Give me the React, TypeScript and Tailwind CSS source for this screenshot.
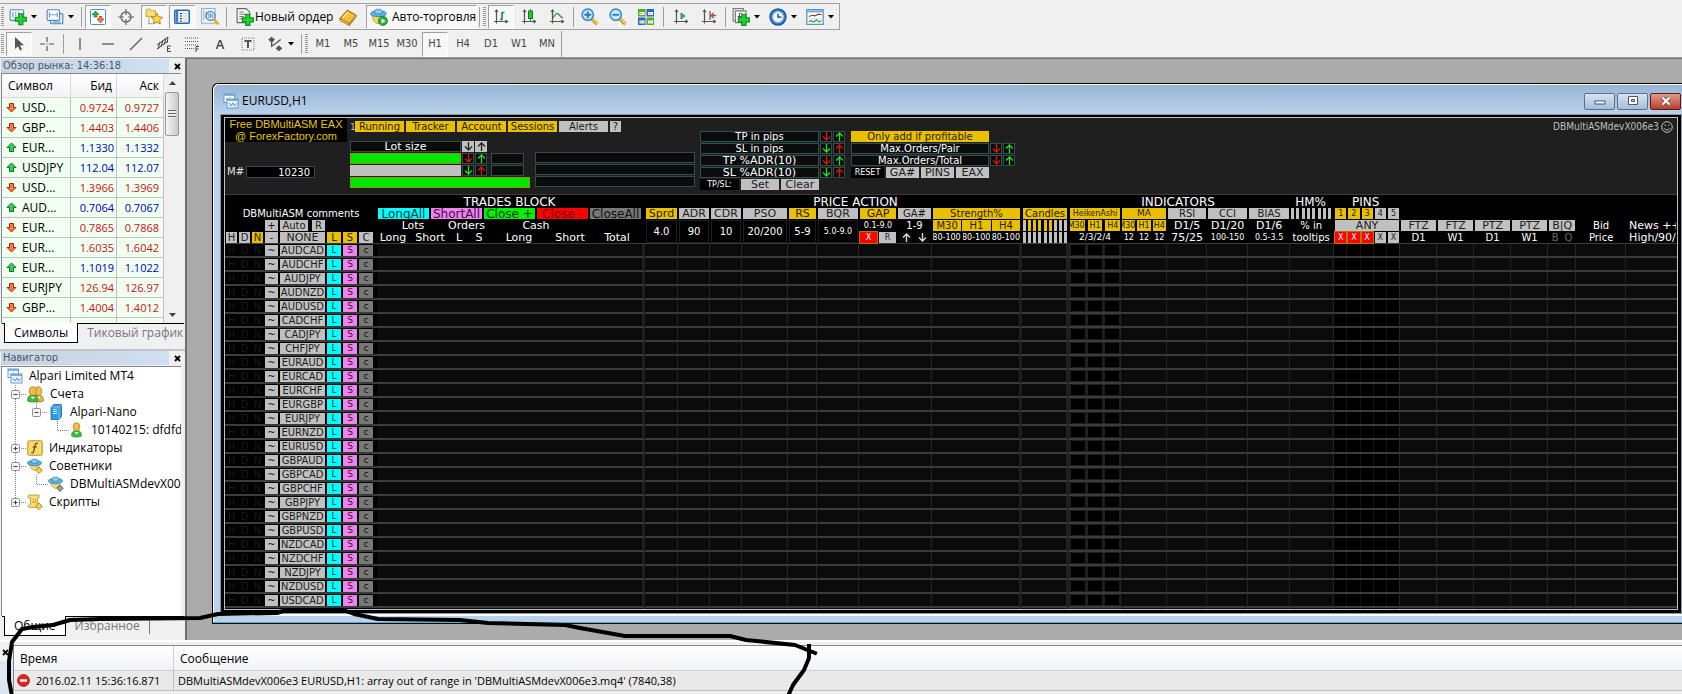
import React, { useState } from 'react';
import clsx from 'clsx';

type Quote = { symbol: string; bid: string; ask: string; up: boolean };

const QUOTES: Quote[] = [
  { symbol: 'USD...', bid: '0.9724', ask: '0.9727', up: false },
  { symbol: 'GBP...', bid: '1.4403', ask: '1.4406', up: false },
  { symbol: 'EUR...', bid: '1.1330', ask: '1.1332', up: true },
  { symbol: 'USDJPY', bid: '112.04', ask: '112.07', up: true },
  { symbol: 'USD...', bid: '1.3966', ask: '1.3969', up: false },
  { symbol: 'AUD...', bid: '0.7064', ask: '0.7067', up: true },
  { symbol: 'EUR...', bid: '0.7865', ask: '0.7868', up: false },
  { symbol: 'EUR...', bid: '1.6035', ask: '1.6042', up: false },
  { symbol: 'EUR...', bid: '1.1019', ask: '1.1022', up: true },
  { symbol: 'EURJPY', bid: '126.94', ask: '126.97', up: false },
  { symbol: 'GBP...', bid: '1.4004', ask: '1.4012', up: false },
];

const PAIRS = [
  'AUDCAD', 'AUDCHF', 'AUDJPY', 'AUDNZD', 'AUDUSD', 'CADCHF', 'CADJPY', 'CHFJPY', 'EURAUD',
  'EURCAD', 'EURCHF', 'EURGBP', 'EURJPY', 'EURNZD', 'EURUSD', 'GBPAUD', 'GBPCAD', 'GBPCHF',
  'GBPJPY', 'GBPNZD', 'GBPUSD', 'NZDCAD', 'NZDCHF', 'NZDJPY', 'NZDUSD', 'USDCAD', 'USDCHF',
];

const TIMEFRAMES = ['M1', 'M5', 'M15', 'M30', 'H1', 'H4', 'D1', 'W1', 'MN'];

/* ---------- icons ---------- */

function Icon({ children, size = 16 }: { children: React.ReactNode; size?: number }) {
  return (
    <svg width={size} height={size} viewBox="0 0 16 16" fill="none" className="shrink-0" aria-hidden="true">
      {children}
    </svg>
  );
}

const Plus = ({ x = 5, y = 5 }: { x?: number; y?: number }) => (
  <path
    transform={`translate(${x} ${y})`}
    d="M3.7 .6h3.6v3.1h3.1v3.6H7.3v3.1H3.7V7.3H.6V3.7h3.1z"
    fill="#22d436"
    stroke="#0b8a1c"
    strokeWidth="1"
  />
);

const NewChartIcon = () => (
  <Icon size={18}>
    <rect x="1" y="1.5" width="12" height="9.5" rx="1" fill="#fff" stroke="#4c86bd" />
    <path d="M3.5 3.5v5M2.5 5h1M3.5 7h1M6 3v4M8.5 3v3" stroke="#7fa9d0" />
    <Plus x={5} y={4.5} />
  </Icon>
);

const ProfilesIcon = () => (
  <Icon size={18}>
    <rect x="4" y="5" width="11" height="9" rx="1" fill="#e3eefb" stroke="#4c86bd" />
    <rect x="1" y="1.5" width="11" height="9.5" rx="1" fill="#fff" stroke="#4c86bd" />
    <path d="M3 3.5v5M3 6h7M10 4v4M6 12.5h7" stroke="#6f9dcc" />
  </Icon>
);

const MarketWatchIcon = () => (
  <Icon>
    <rect x=".5" y=".5" width="15" height="15" rx="1" fill="#fff" stroke="#4c8fd6" />
    <path d="M2 5.5L5.5 2 9 5.5H7V8H4V5.5z" fill="#2fb34a" stroke="#0f7a27" strokeWidth=".7" />
    <path d="M7 10l3.5 4 3.5-4h-2V7.5H9V10z" fill="#ef7b50" stroke="#b53a17" strokeWidth=".7" />
  </Icon>
);

const TargetIcon = () => (
  <Icon>
    <circle cx="8" cy="8" r="5" stroke="#666" strokeWidth="1.4" />
    <path d="M8 0v6M8 10v6M0 8h6M10 8h6" stroke="#666" strokeWidth="1.2" />
  </Icon>
);

const NavigatorIcon = () => (
  <Icon size={18}>
    <path d="M1 2.5c0-1 .5-1.5 1.500-1.500h2l1 1.500h4v5H1z" fill="#fbe07c" stroke="#c69a1e" strokeWidth=".8" />
    <path d="M3.500 9v6M3.500 14h4" stroke="#555" strokeDasharray="1 1" />
    <path d="M10.500 4.500l1.600 3.300 3.400.5-2.500 2.500.6 3.500-3.100-1.700-3.100 1.700.6-3.500L5.500 8.300l3.400-.5z" fill="#fcd94a" stroke="#a87c10" strokeWidth=".8" />
  </Icon>
);

const TerminalIcon = () => (
  <Icon>
    <rect x=".75" y="1.250" width="14.500" height="13" rx="1" fill="#f3f9ff" stroke="#2668ad" strokeWidth="1.500" />
    <path d="M3 2v11.500" stroke="#3e80c4" strokeWidth="2.500" />
    <path d="M6 4.500h2M6 7h2M6 9.500h2M6 12h2" stroke="#222" />
    <path d="M9 4.500h4M9 7h4M9 9.500h4M9 12h4" stroke="#bcd" />
  </Icon>
);

const TesterIcon = () => (
  <Icon size={18}>
    <rect x=".5" y=".5" width="12" height="13" fill="#f4f8fc" stroke="#9ab0c4" />
    <path d="M2.500 2v9M4.500 3v6" stroke="#9ab0c4" />
    <circle cx="8.500" cy="7" r="4" fill="#d4e8fa" stroke="#5585b5" strokeWidth="1.200" />
    <path d="M7 5v4M8.500 4.500v4M10 5.500v3" stroke="#5585b5" strokeWidth=".8" />
    <path d="M11.500 10l4 4.500" stroke="#e0aa2c" strokeWidth="2.200" />
  </Icon>
);

const NewOrderIcon = () => (
  <Icon size={18}>
    <path d="M1 .5h8l3 3V13H1z" fill="#fff" stroke="#666" />
    <path d="M3 3.500h4M3 5.500h6M3 7.500h4M3 9.500h3" stroke="#777" />
    <Plus x={5} y={5} />
  </Icon>
);

const BookIcon = () => (
  <Icon size={18}>
    <path d="M.8 9.500L7.500 2l7.700 4.500-6 7.500z" fill="#f4bf35" stroke="#9b6a0c" strokeWidth=".9" />
    <path d="M.8 9.500l.2 1.800 8.200 4.300V14zM9.200 15.600l6-7.600V6.500" fill="#fff1c0" stroke="#9b6a0c" strokeWidth=".8" />
    <path d="M3 8.800L8 3.500" stroke="#ffe9a5" strokeWidth="1.200" />
  </Icon>
);

function Hat({ y = 0 }: { y?: number }) {
  return (
    <g transform={`translate(0 ${y})`}>
      <ellipse cx="7.500" cy="5" rx="7" ry="2.700" fill="#5eb4e6" stroke="#2a78b0" strokeWidth=".7" />
      <path d="M4 4.500C4 1.500 5.500 .7 7.500 1.300 9.500 .7 11 1.500 11 4.500c-2 1.200-5 1.200-7 0z" fill="#86cdf3" stroke="#2a78b0" strokeWidth=".7" />
    </g>
  );
}

const AutoTradeIcon = () => (
  <Icon size={18}>
    <path d="M2 6c0 3 1 7 5 8l5-1 1-7z" fill="#f8d65a" stroke="#b48a1c" strokeWidth=".7" />
    <Hat />
    <circle cx="11.500" cy="11.500" r="4" fill="#2bb13e" stroke="#0d7c20" strokeWidth=".7" />
    <path d="M10.300 9.300v4.400l3.400-2.200z" fill="#fff" />
  </Icon>
);

const ExpertIcon = ({ dim }: { dim?: boolean }) => (
  <Icon>
    <path d="M2.500 6.500c.5 3 2 5 5 6l3-2 2-4z" fill="#f3d674" stroke="#b48a1c" strokeWidth=".6" />
    <Hat />
    <path d="M12 9l3.300 3.300L12 15.600l-3.300-3.300z" fill={dim ? '#9a9a9a' : '#f7cb45'} stroke={dim ? '#555' : '#a27711'} strokeWidth=".8" />
  </Icon>
);

const Axes = () => <path d="M3.500 1v13.500M1 12.500h13M2 3l1.500-2L5 3M12.500 11l2 1.500-2 1.500" stroke="#555" strokeWidth="1.200" />;

const BarsIcon = () => (
  <Icon><Axes /><path d="M9 3v8M9 3.500h2.500M7 10.500h2" stroke="#1a8f2c" strokeWidth="1.600" /></Icon>
);
const CandlesIcon = () => (
  <Icon><Axes /><path d="M9.500 0v12" stroke="#1a8f2c" /><rect x="7.500" y="2" width="4" height="7.500" fill="#22c43a" stroke="#107a20" /></Icon>
);
const LineIcon = () => (
  <Icon><Axes /><path d="M4 9c2-4 4-5.500 5.500-4S11 7.500 14 9" stroke="#2f9a40" strokeWidth="1.300" /></Icon>
);
const ScrollIcon = () => (
  <Icon><Axes /><path d="M8 4l4 3-4 3z" fill="#43c557" stroke="#107a20" strokeWidth=".8" /></Icon>
);
const ShiftIcon = () => (
  <Icon><Axes /><path d="M9 2v9" stroke="#3c6f9c" strokeWidth="1.300" /><path d="M15 6.500h-4M12.500 4L10 6.500 12.500 9" stroke="#c3441b" strokeWidth="1.300" /></Icon>
);

const ZoomIcon = ({ plus }: { plus?: boolean }) => (
  <Icon size={18}>
    <path d="M9.500 9.500l5 5" stroke="#c99a1c" strokeWidth="3" />
    <path d="M10 9.500l5 5" stroke="#ffe27a" strokeWidth="1" />
    <circle cx="6" cy="6" r="5" fill="#c9e8fb" stroke="#3d8cc7" strokeWidth="1.500" />
    <path d={plus ? 'M3 6h6M6 3v6' : 'M3 6h6'} stroke="#2a78b8" strokeWidth="1.600" />
  </Icon>
);

const TileIcon = () => (
  <Icon>
    <rect x="0" y="0" width="7.500" height="7.500" fill="#57a92c" /><rect x="8.500" y="0" width="7.500" height="7.500" fill="#2f63c4" />
    <rect x="0" y="8.500" width="7.500" height="7.500" fill="#2f63c4" /><rect x="8.500" y="8.500" width="7.500" height="7.500" fill="#57a92c" />
    <path d="M1.500 4.500h5M10 4.500h5M1.500 13h5M10 13h5" stroke="#fff" strokeWidth="3" />
    <path d="M2 4.500h3M10.500 4.500h3M2 13h3M10.500 13h3" stroke="#9bb" />
  </Icon>
);

const IndicatorsIcon = () => (
  <Icon size={18}>
    <rect x="1" y=".5" width="9" height="11" fill="#f6f6f6" stroke="#777" />
    <path d="M3 2.500h9.500V13H3z" fill="#fff" stroke="#777" />
    <path d="M8.500 4.500c-1.500-.3-2 .5-2 2V11M5 7.500h3" stroke="#555" />
    <Plus x={5} y={5} />
  </Icon>
);

const ClockIcon = () => (
  <Icon size={18}>
    <circle cx="8" cy="8" r="7.200" fill="#2f7bd0" stroke="#174f93" />
    <circle cx="8" cy="8" r="4.800" fill="#eef6ff" stroke="#9cc3ee" />
    <path d="M8 5v3.200h3" stroke="#234" strokeWidth="1.100" />
  </Icon>
);

const TemplateIcon = () => (
  <Icon size={18}>
    <rect x=".75" y="1.500" width="14.500" height="13" fill="#fff" stroke="#4a83ba" />
    <path d="M1 3h14" stroke="#78aee0" strokeWidth="2" />
    <path d="M2.500 7.500l3-1 2.500.5 3-1.500 3 .5" stroke="#8a4030" />
    <path d="M2 9.300h12" stroke="#ccd" strokeWidth=".6" />
    <path d="M2.500 12.500l2-1.500 2 1.500 3-2 2 2 2-1.500" stroke="#2f9a40" />
  </Icon>
);

const ChartsIcon = () => (
  <Icon>
    <rect x="1" y="1" width="10.500" height="8.500" fill="#fff" stroke="#5f9bd3" />
    <path d="M1 2h10.500" stroke="#5f9bd3" strokeWidth="1.500" />
    <path d="M3 6h1.500M6 5h1.500" stroke="#5f9bd3" />
    <rect x="4" y="6" width="11" height="9" fill="#eaf4ff" stroke="#5f9bd3" />
    <path d="M4 7h11" stroke="#5f9bd3" strokeWidth="1.500" />
    <path d="M6 10l2 3 2-3 1.500 3 2-2.500" stroke="#4a83ba" strokeWidth=".9" />
  </Icon>
);

function Person({ x, body, head }: { x: number; body: string; head: string }) {
  return (
    <g transform={`translate(${x} 0)`}>
      <path d="M.5 14c0-4 1.500-5.500 5-5.500s5 1.500 5 5.500c-2 1.500-8 1.500-10 0z" fill={body} stroke="#4c6f14" strokeWidth=".6" />
      <ellipse cx="5.500" cy="4.800" rx="3.300" ry="4" fill={head} stroke="#a5731c" strokeWidth=".7" />
      <path d="M3.500 10l2 2.500 2-2.500" fill="#fff" />
    </g>
  );
}

const PeopleIcon = () => (
  <Icon size={17}>
    <Person x={5} body="#e8b83a" head="#f0bf55" />
    <Person x={0} body="#37c03c" head="#eebb4a" />
  </Icon>
);
const PersonIcon = () => <Icon><Person x={2} body="#2fc436" head="#f2bd4b" /></Icon>;

const ServerIcon = () => (
  <Icon>
    <path d="M3 3l3-2.500h7.500v12L11 15.500H3z" fill="#2f9be0" stroke="#146bab" strokeWidth=".8" />
    <path d="M3 3h8v12.500M11 3l2.500-2.500" stroke="#8fd0f8" strokeWidth=".8" />
    <path d="M5 5.500h4M5 7.500h4M5 9.500h4" stroke="#d8f0ff" />
  </Icon>
);

const FunctionIcon = () => (
  <Icon>
    <rect x=".75" y=".75" width="14.500" height="14.500" rx="1.500" fill="#f7d868" stroke="#bd9224" />
    <path d="M11 3.500c-2-.8-2.700.3-3 2L6.800 11c-.3 1.600-1 2-2.300 1.500M5.500 7h4.500" stroke="#5c4306" strokeWidth="1.200" />
  </Icon>
);

const ScriptIcon = () => (
  <Icon>
    <path d="M2 1h10v3h-1.500v7H12v2.500H2.500c-1.500 0-2-2.500 0-2.500h1V4H2C.5 4 .5 1 2 1z" fill="#f8dd78" stroke="#b98f22" strokeWidth=".8" />
    <path d="M5.500 5.500h1M8 5.500h1M5.500 8h3.500" stroke="#a87c10" />
    <path d="M12 9l3.300 3.300L12 15.600l-3.300-3.300z" fill="#f7cb45" stroke="#a27711" strokeWidth=".8" />
  </Icon>
);

const Caret = () => (
  <svg width="7" height="4" viewBox="0 0 7 4" aria-hidden="true" className="shrink-0">
    <path d="M0 0h6L3 3.500z" fill="#000" />
  </svg>
);

const CloseGlyph = () => (
  <svg width="7" height="7" viewBox="0 0 7 7" aria-hidden="true">
    <path d="M1 1l5 5M6 1L1 6" stroke="#000" strokeWidth="1.800" />
  </svg>
);

const QuoteArrow = ({ up }: { up: boolean }) => (
  <svg width="11" height="11" viewBox="0 0 11 11" aria-hidden="true" className="shrink-0">
    {up ? (
      <path d="M5.500 1l4.500 4.500H7.500V9.500h-4V5.500H1z" fill="#35cf55" stroke="#11702a" />
    ) : (
      <path d="M5.500 10L10 5.500H7.500V1.500h-4v4H1z" fill="#ff7a3c" stroke="#a02c0c" />
    )}
  </svg>
);

/* ---------- toolbars ---------- */

const Grip = () => <span className="mx-px h-5 w-[3px] shrink-0 bg-[repeating-linear-gradient(#9a9a9a_0_1px,#f0f0f0_1px_2px)]" />;

const Divider = ({ wide }: { wide?: boolean }) => (
  <span className={clsx('flex h-5 shrink-0 justify-center', wide ? 'w-[7px]' : 'w-[5px]')}>
    <span className="w-px bg-[#a0a0a0]" />
  </span>
);

const PRESSED = 'border border-b-white border-r-white border-l-[#a0a0a0] border-t-[#a0a0a0] bg-[#f8f8f8]';

function Tool({ label, pressed, children }: { label: string; pressed?: boolean; children: React.ReactNode }) {
  return (
    <button type="button" aria-label={label} aria-pressed={pressed} className="flex h-6 w-7 shrink-0 px-px text-[#444]">
      <span className={clsx('flex size-full items-center justify-center', pressed && PRESSED)}>{children}</span>
    </button>
  );
}

function DropTool({ label, children }: { label: string; children: React.ReactNode }) {
  return (
    <button type="button" aria-label={label} className="flex h-6 w-[37px] shrink-0 items-center gap-1 pl-1">
      {children}
      <Caret />
    </button>
  );
}

function MainToolbar() {
  return (
    <div className="flex h-[27px] items-center self-start border-y border-r border-[#a0a0a0]">
      <Grip />
      <DropTool label="New chart"><NewChartIcon /></DropTool>
      <DropTool label="Profiles"><ProfilesIcon /></DropTool>
      <Divider />
      <Tool label="Market watch" pressed><MarketWatchIcon /></Tool>
      <Tool label="Data window"><TargetIcon /></Tool>
      <Tool label="Navigator" pressed><NavigatorIcon /></Tool>
      <Tool label="Terminal" pressed><TerminalIcon /></Tool>
      <Tool label="Tester"><TesterIcon /></Tool>
      <Divider />
      <button type="button" className="flex h-6 w-[105px] items-center gap-px pl-[7px] whitespace-nowrap">
        <NewOrderIcon />
        Новый ордер
      </button>
      <Tool label="MetaEditor"><BookIcon /></Tool>
      <button type="button" className={clsx('ml-1 flex h-6 w-[111px] items-center gap-1 pl-[3px] whitespace-nowrap', PRESSED)}>
        <AutoTradeIcon />
        Авто-торговля
      </button>
      <Divider />
      <Grip />
      <Tool label="Bar chart" pressed><BarsIcon /></Tool>
      <Tool label="Candlesticks"><CandlesIcon /></Tool>
      <Tool label="Line chart"><LineIcon /></Tool>
      <Divider />
      <Tool label="Zoom in"><ZoomIcon plus /></Tool>
      <Tool label="Zoom out"><ZoomIcon /></Tool>
      <Tool label="Tile windows"><TileIcon /></Tool>
      <Divider wide />
      <Tool label="Auto scroll"><ScrollIcon /></Tool>
      <Tool label="Chart shift"><ShiftIcon /></Tool>
      <Divider />
      <DropTool label="Indicators"><IndicatorsIcon /></DropTool>
      <DropTool label="Periods"><ClockIcon /></DropTool>
      <DropTool label="Templates"><TemplateIcon /></DropTool>
    </div>
  );
}

function DrawingToolbar() {
  const [tf, setTf] = useState('H1');
  return (
    <div className="mt-px flex h-[26px] items-center self-start border-r border-[#a0a0a0]">
      <Grip />
      <Tool label="Cursor" pressed>
        <Icon><path d="M4 1v12l3-2.800 2 4.300 2-1-2-4.200h4z" fill="#555" /></Icon>
      </Tool>
      <Tool label="Crosshair">
        <Icon><path d="M8 1v5M8 10v5M1 8h5M10 8h5M7.500 8h1" stroke="#555" strokeWidth="1.200" /></Icon>
      </Tool>
      <Divider />
      <Tool label="Vertical line"><Icon><path d="M8 2v12" stroke="#555" strokeWidth="1.300" /></Icon></Tool>
      <Tool label="Horizontal line"><Icon><path d="M2 8h12" stroke="#555" strokeWidth="1.300" /></Icon></Tool>
      <Tool label="Trendline"><Icon><path d="M2 14L14 2" stroke="#555" strokeWidth="1.300" /></Icon></Tool>
      <Tool label="Equidistant channel">
        <Icon>
          <path d="M1 9l11-8M1 13l11-8M4 6l-2 7M7 4L5 11M10 2L8 9M12 1l-1 6" stroke="#444" />
          <path d="M15 10h-3.500v5.500H15M11.500 12.700H14" stroke="#444" />
        </Icon>
      </Tool>
      <Tool label="Fibonacci">
        <Icon>
          <path d="M1 2h13M1 5.500h13M1 9h13M1 12.500h9" stroke="#555" strokeDasharray="1 1" />
          <path d="M15 10.500h-3V16M12 13h2.500" stroke="#444" />
        </Icon>
      </Tool>
      <Tool label="Text"><span className="text-[13px] font-semibold">A</span></Tool>
      <Tool label="Text label">
        <Icon>
          <rect x="2" y="2" width="12" height="12" stroke="#777" strokeDasharray="1 1" />
          <path d="M4.500 5h7M8 5v7" stroke="#555" strokeWidth="2" />
        </Icon>
      </Tool>
      <DropTool label="Arrows">
        <Icon size={18}>
          <path d="M2 4l3-2.500L8 4 5 7zM8.500 12l3-3 3 3-3 2.500z" fill="#555" />
          <path d="M5 6v4l3-2M8 8l5-4" stroke="#555" strokeWidth="1.200" />
        </Icon>
      </DropTool>
      <Divider />
      <Grip />
      {TIMEFRAMES.map((name) => (
        <button key={name} type="button" onClick={() => setTf(name)} aria-pressed={tf === name} className="flex h-[25px] w-7 shrink-0 px-px">
          <span className={clsx('flex size-full items-center justify-center font-[DejaVu_Sans_Condensed,DejaVu_Sans,sans-serif] text-[11px] text-[#444]', tf === name && PRESSED)}>
            {name}
          </span>
        </button>
      ))}
    </div>
  );
}

/* ---------- left side ---------- */

function PanelTitle({ children }: { children: React.ReactNode }) {
  return (
    <div className="flex h-[14px] shrink-0 items-center pl-px">
      <h2 className="h-[14px] flex-1 bg-linear-to-r from-[#c9d3de] to-[#cfe0f1] pl-[2px] font-[DejaVu_Sans_Condensed,DejaVu_Sans,sans-serif] text-[11px] leading-[13px] text-[#44566e]">
        {children}
      </h2>
      <button type="button" aria-label="Close" className="flex w-4 justify-center"><CloseGlyph /></button>
    </div>
  );
}

function BottomTabs({ tabs, line }: { tabs: string[]; line?: boolean }) {
  return (
    <div className="mr-px ml-[2px] flex h-6 shrink-0 items-start border-t border-black">
      <button type="button" className="-mt-px ml-[2px] h-5 border border-t-0 border-black bg-white px-[9px] whitespace-nowrap">{tabs[0]}</button>
      <button type="button" className={clsx('h-[17px] px-[9px] text-left whitespace-nowrap text-[#777]', line && 'border-r border-[#777]')}>{tabs[1]}</button>
    </div>
  );
}

function MarketWatch() {
  return (
    <section className="flex shrink-0 flex-col border-b-2 border-[#c4c4c4] pt-px pb-[2px]">
      <PanelTitle>Обзор рынка: 14:36:18</PanelTitle>
      <div className="mr-1 ml-px flex h-[250px] overflow-hidden border-t border-l border-[#828790] bg-white">
        <table className="w-[162px] table-fixed border-separate border-spacing-0 self-start">
          <colgroup>
            <col className="w-[69px]" />
            <col className="w-[46px]" />
            <col />
          </colgroup>
          <thead>
            <tr className="bg-linear-to-b from-white to-[#f1f2f4]">
              <th className="h-6 border-r border-b border-[#d8d8d8] p-0 pl-[6px] text-left font-normal">Символ</th>
              <th className="h-6 border-r border-b border-[#d8d8d8] p-0 pr-1 text-right font-normal">Бид</th>
              <th className="h-6 border-r border-b border-[#d8d8d8] p-0 pr-1 text-right font-normal">Аск</th>
            </tr>
          </thead>
          <tbody>
            {QUOTES.map((q, i) => (
              <tr key={i} className={clsx('bg-[#f0fff0]', q.up ? 'text-[#0000c8]' : 'text-[#c81414]')}>
                <td className="h-5 border-r border-b border-[#c0c0c0] p-0 pl-1 text-black">
                  <span className="flex items-center gap-[5px] leading-4"><QuoteArrow up={q.up} />{q.symbol}</span>
                </td>
                <td className="h-5 border-r border-b border-[#c0c0c0] p-0 pr-[2px] text-right text-[11px] leading-4">{q.bid}</td>
                <td className="h-5 border-r border-b border-[#c0c0c0] p-0 pr-1 text-right text-[11px] leading-4">{q.ask}</td>
              </tr>
            ))}
            <tr className="bg-[#f0fff0]">
              <td className="h-5 border-r border-[#c0c0c0]" />
              <td className="h-5 border-r border-[#c0c0c0]" />
              <td className="h-5 border-r border-[#c0c0c0]" />
            </tr>
          </tbody>
        </table>
        <div className="flex flex-1 flex-col items-center justify-between bg-[#f0f0f0] pt-[7px] pb-[6px]">
          <div className="flex w-full flex-col items-center gap-[7px]">
            <svg width="7" height="4" viewBox="0 0 7 4" aria-hidden="true"><path d="M0 4l3.500-4L7 4z" fill="#444" /></svg>
            <div className="mr-px flex h-11 w-[14px] items-center justify-center rounded-xs border border-[#979797] bg-linear-to-r from-[#f5f5f5] to-[#c9c9c9]">
              <span className="h-2 w-2 bg-[repeating-linear-gradient(#666_0_1px,#eee_1px_3px)]" />
            </div>
          </div>
          <svg width="7" height="4" viewBox="0 0 7 4" aria-hidden="true"><path d="M0 0l3.500 4L7 0z" fill="#444" /></svg>
        </div>
      </div>
      <BottomTabs tabs={['Символы', 'Тиковый график']} />
    </section>
  );
}

type Node = { label: string; icon: React.ReactNode; width: number; lines: string; box?: { x: number; open: boolean } };

const TREE: Node[] = [
  { label: 'Alpari Limited MT4', icon: <ChartsIcon />, width: 5, lines: '' },
  { label: 'Счета', icon: <PeopleIcon />, width: 25, lines: 'M13.5 0v18M17 9.500h8', box: { x: 13, open: true } },
  { label: 'Alpari-Nano', icon: <ServerIcon />, width: 46, lines: 'M13.5 0v18M34.5 0v9M38 9.500h8', box: { x: 34, open: true } },
  { label: '10140215: dfdfdfd', icon: <PersonIcon />, width: 67, lines: 'M13.5 0v18M55.5 0v9.500h12' },
  { label: 'Индикаторы', icon: <FunctionIcon />, width: 25, lines: 'M13.5 0v18M17 9.500h8', box: { x: 13, open: false } },
  { label: 'Советники', icon: <ExpertIcon />, width: 25, lines: 'M13.5 0v18M17 9.500h8', box: { x: 13, open: true } },
  { label: 'DBMultiASMdevX006e3', icon: <ExpertIcon dim />, width: 46, lines: 'M13.5 0v18M34.5 0v9.500h12' },
  { label: 'Скрипты', icon: <ScriptIcon />, width: 25, lines: 'M13.5 0v9M17 9.500h8', box: { x: 13, open: false } },
];

function Navigator() {
  return (
    <section className="flex min-h-0 flex-1 flex-col">
      <PanelTitle>Навигатор</PanelTitle>
      <ul className="mt-px mr-1 ml-px min-h-0 flex-1 overflow-hidden border-t border-l border-[#828790] bg-white">
        {TREE.map((n) => (
          <li key={n.label} className="flex h-[18px] items-center whitespace-nowrap">
            <svg width={n.width} height="18" className="shrink-0" aria-hidden="true">
              <path d={n.lines} stroke="#808080" strokeDasharray="1 1" fill="none" />
              {n.box && (
                <g>
                  <rect x={n.box.x - 3.5} y="5.500" width="8" height="8" rx="1" fill="#f4f4f4" stroke="#919191" />
                  <path d={`M${n.box.x - 1.5} 9.500h4`} stroke="#2a3f8f" />
                  {!n.box.open && <path d={`M${n.box.x + 0.5} 7.500v4`} stroke="#2a3f8f" />}
                </g>
              )}
            </svg>
            {n.icon}
            <span className="pl-[6px]">{n.label}</span>
          </li>
        ))}
      </ul>
      <BottomTabs tabs={['Общие', 'Избранное']} line />
    </section>
  );
}

/* ---------- dashboard pieces ---------- */

const TONES = {
  gold: 'bg-[#e8c000] text-[#2a2200]',
  silver: 'bg-[#c0c0c0] text-[#1c1c1c]',
  cyan: 'bg-[#00ffff] text-[#003838]',
  violet: 'bg-[#ee82ee] text-[#401040]',
  lime: 'bg-[#00f000] text-[#003800]',
  red: 'bg-[#ff0000] text-[#700000]',
  off: 'bg-[#ff0000] text-white outline outline-[#b07800]',
  gray: 'bg-[#787878] text-[#101010]',
  plain: 'text-white',
  dim: 'text-[#666]',
  edit: 'bg-[#0b0b0b] text-white border border-[#2f4f4f]',
};

const SIZES = { xs: 'text-[8px]', sm: 'text-[9px]', md: 'text-[10px]', lg: 'text-[11px]', xl: 'text-[12px]' };

type TagProps = { tone?: keyof typeof TONES; size?: keyof typeof SIZES; className?: string; children?: React.ReactNode };

function Tag({ tone = 'silver', size = 'lg', className, children }: TagProps) {
  const cls = clsx('flex h-[11px] min-w-0 items-center overflow-hidden leading-none whitespace-nowrap', TONES[tone], SIZES[size], className ?? '', !className?.includes('justify-') && 'justify-center');
  if (tone === 'plain' || tone === 'dim' || tone === 'edit') return <div className={cls}>{children}</div>;
  return <button type="button" className={cls}>{children}</button>;
}

function ArrowBtn({ dir, color, bg }: { dir: 'up' | 'down'; color: string; bg?: string }) {
  return (
    <button type="button" aria-label={dir} className={clsx('flex h-[11px] w-3 items-center justify-center', bg ?? 'border border-[#2f4f4f] bg-[#0b0b0b]')}>
      <svg width="9" height="9" viewBox="0 0 9 9" fill="none" aria-hidden="true" className="shrink-0">
        <path d={dir === 'up' ? 'M4.5 9V1M1 4.500L4.500 1 8 4.500' : 'M4.5 0v8M1 4.500L4.500 8 8 4.500'} stroke={color} strokeWidth="1.300" />
      </svg>
    </button>
  );
}

const RED = '#e01010';
const GREEN = '#20e020';

function Arrows({ flip }: { flip?: boolean }) {
  return (
    <>
      <ArrowBtn dir="down" color={flip ? GREEN : RED} />
      <ArrowBtn dir="up" color={flip ? RED : GREEN} />
    </>
  );
}

function ControlPanel() {
  return (
    <div className="flex h-[76px] items-start bg-[#1f1f1f]">
      <div className="w-[125px] shrink-0">
        <p className="w-[122px] bg-black text-center font-[Liberation_Sans,Arial,sans-serif] text-[11px] leading-3 whitespace-nowrap text-[#e8c800]">
          Free DBMultiASM EAX
          <br />@ ForexFactory.com
        </p>
        <div className="mt-6 flex items-center gap-[2px] pl-[2px] text-[10px] leading-3 text-[#e0e0e0]">
          <label htmlFor="magic">M#</label>
          <input id="magic" defaultValue="10230" className="h-3 w-[69px] border border-[#2f4f4f] bg-black pr-1 text-right text-[10px] leading-none text-white" />
        </div>
      </div>

      <div className="w-[345px] shrink-0 pt-[3px]">
        <div className="flex h-[11px] items-center gap-[2px] text-[#c0c0c0]">
          <span className="w-[3px] text-[9px]">1</span>
          <Tag tone="gold" size="md" className="w-[49px]">Running</Tag>
          <Tag tone="gold" size="md" className="w-[49px]">Tracker</Tag>
          <Tag tone="gold" size="md" className="w-[49px]">Account</Tag>
          <Tag tone="gold" size="md" className="w-[49px]">Sessions</Tag>
          <Tag size="md" className="w-[49px]">Alerts</Tag>
          <Tag size="md" className="w-[11px]">?</Tag>
        </div>
        <div className="mt-[9px] flex gap-[5px]">
          <div className="flex w-[180px] flex-col gap-px">
            <div className="flex gap-px">
              <Tag tone="edit" className="w-[111px]">Lot size</Tag>
              <ArrowBtn dir="down" color="#222" bg="bg-[#c0c0c0]" />
              <ArrowBtn dir="up" color="#222" bg="bg-[#c0c0c0]" />
            </div>
            <div className="flex gap-px">
              <input aria-label="Lot size 1" className="h-[11px] w-[111px] border border-[#8a9a00] bg-[#00e800]" />
              <Arrows />
              <input aria-label="Lot step 1" className="ml-[3px] h-[11px] w-[33px] border border-[#2f4f4f] bg-[#0b0b0b]" />
            </div>
            <div className="flex gap-px">
              <input aria-label="Lot size 2" className="h-[11px] w-[111px] bg-[#c0c0c0]" />
              <Arrows flip />
              <input aria-label="Lot step 2" className="ml-[3px] h-[11px] w-[33px] border border-[#2f4f4f] bg-[#0b0b0b]" />
            </div>
            <input aria-label="Lot size total" className="h-[11px] w-[180px] border border-[#8a9a00] bg-[#00e800]" />
          </div>
          <div className="flex w-40 flex-col gap-px pt-[11px]">
            <input aria-label="Note 1" className="h-[11px] border border-[#2f4f4f] bg-[#0b0b0b]" />
            <input aria-label="Note 2" className="h-[11px] border border-[#2f4f4f] bg-[#0b0b0b]" />
            <input aria-label="Note 3" className="h-[11px] border border-[#2f4f4f] bg-[#0b0b0b]" />
          </div>
        </div>
      </div>

      <div className="ml-[5px] flex w-[151px] shrink-0 flex-col gap-px pt-[13px]">
        {['TP in pips', 'SL in pips', 'TP %ADR(10)', 'SL %ADR(10)'].map((name, i) => (
          <div key={name} className="flex gap-px">
            <Tag tone="edit" size={i < 2 ? 'md' : 'lg'} className="w-[119px]">{name}</Tag>
            <Arrows flip={i % 2 === 1} />
          </div>
        ))}
        <div className="flex gap-[2px]">
          <Tag tone="plain" size="xs" className="w-[39px] bg-black">TP/SL:</Tag>
          <Tag className="w-[38px]">Set</Tag>
          <Tag className="w-[38px]">Clear</Tag>
        </div>
      </div>

      <div className="flex w-[170px] shrink-0 flex-col gap-px pt-[13px]">
        <Tag tone="gold" size="md" className="w-[138px]">Only add if profitable</Tag>
        <div className="flex gap-px">
          <Tag tone="edit" size="md" className="w-[138px]">Max.Orders/Pair</Tag>
          <Arrows />
        </div>
        <div className="flex gap-px">
          <Tag tone="edit" size="md" className="w-[138px]">Max.Orders/Total</Tag>
          <Arrows />
        </div>
        <div className="flex gap-[2px]">
          <Tag tone="plain" size="xs" className="w-[33px] bg-black">RESET</Tag>
          <Tag className="w-[33px]">GA#</Tag>
          <Tag className="w-[33px]">PINS</Tag>
          <Tag className="w-[33px]">EAX</Tag>
        </div>
      </div>

      <p className="ml-auto flex items-center gap-[2px] pt-[3px] pr-1 font-[DejaVu_Sans_Condensed,DejaVu_Sans,sans-serif] text-[10px] leading-3 text-[#c0c0c0]">
        DBMultiASMdevX006e3
        <svg width="12" height="12" viewBox="0 0 12 12" fill="none" stroke="#c0c0c0" aria-hidden="true">
          <circle cx="6" cy="6" r="5.300" />
          <path d="M3 7c1 2.500 5 2.500 6 0M4.200 3.500v1.500M7.800 3.500v1.500" />
        </svg>
      </p>
    </div>
  );
}

/* Three 11px lines under a column title */
function Stack({ className, children }: { className?: string; children: React.ReactNode }) {
  return <div className={clsx('grid h-9 grid-rows-[11px_11px_11px] gap-y-px px-px pt-px', className)}>{children}</div>;
}

const Value = ({ size = 'md', children }: { size?: keyof typeof SIZES; children: React.ReactNode }) => (
  <div className={clsx('row-span-2 flex items-center justify-center overflow-hidden border border-[#1c1c1c] leading-none whitespace-nowrap text-white', SIZES[size])}>
    {children}
  </div>
);

function Stripes({ gold = [], count }: { gold?: number[]; count: number }) {
  return (
    <div className="flex justify-between">
      {Array.from({ length: count }, (_, i) => (
        <span key={i} className={clsx('h-[11px] w-[3px]', gold.includes(i) ? 'bg-[#e8c000]' : 'bg-[#c0c0c0]')} />
      ))}
    </div>
  );
}

/* right edge of each data column */
const THIN = 'border-r border-r-[#262626]';
const THICK = 'border-r-[3px] border-r-[#1f1f1f]';

const PAIR_GRID = 'grid grid-cols-[11px_11px_11px_13px_45px_14px_14px_14px] gap-x-[2px] pl-px';

function Section({ span = 1, children }: { span?: number; children?: string }) {
  return (
    <th className="h-3 p-0 font-normal" colSpan={span}>
      <div className="h-3 pr-[3px] leading-[14px]">{children}</div>
    </th>
  );
}

function DashHead() {
  const th = 'h-[37px] border-b border-[#3c3c3c] p-0 font-normal align-top';
  return (
    <thead className="bg-black">
      <tr className="text-[12px] whitespace-nowrap text-white">
        <Section />
        <Section>TRADES BLOCK</Section>
        <Section span={10}>PRICE ACTION</Section>
        <Section span={5}>INDICATORS</Section>
        <Section>HM%</Section>
        <Section>PINS</Section>
        <Section span={7} />
      </tr>
      <tr>
        <th className={th}>
          <div className="flex h-9 flex-col gap-px pt-px">
            <Tag tone="plain" size="md">DBMultiASM comments</Tag>
            <div className={PAIR_GRID}>
              <Tag size="md" className="col-start-4">+</Tag>
              <div className="flex gap-1">
                <Tag size="md" className="w-7">Auto</Tag>
                <Tag size="md" className="w-[13px] shrink-0">R</Tag>
              </div>
            </div>
            <div className={PAIR_GRID}>
              <Tag size="md">H</Tag>
              <Tag size="md">D</Tag>
              <Tag size="md" tone="gold">N</Tag>
              <Tag size="md">-</Tag>
              <Tag>NONE</Tag>
              <Tag size="md" tone="gold">L</Tag>
              <Tag size="md" tone="gold">S</Tag>
              <Tag size="md">C</Tag>
            </div>
          </div>
        </th>
        <th className={clsx(th, 'text-white')}>
          <Stack className="pr-1">
            <div className="grid grid-cols-5 gap-[2px]">
              <Tag size="xl" tone="cyan">LongAll</Tag>
              <Tag size="xl" tone="violet">ShortAll</Tag>
              <Tag size="xl" tone="lime">Close +</Tag>
              <Tag size="xl" tone="red">Close -</Tag>
              <Tag size="xl" tone="gray">CloseAll</Tag>
            </div>
            <div className="grid grid-cols-[70px_37px_102px] text-[11px] leading-[12px]">
              <span>Lots</span><span>Orders</span><span>Cash</span>
            </div>
            <div className="grid grid-cols-[30px_44px_14px_26px_54px_48px_46px] text-[11px] leading-[12px]">
              <span>Long</span><span>Short</span><span>L</span><span>S</span><span>Long</span><span>Short</span><span>Total</span>
            </div>
          </Stack>
        </th>
        <th className={th}><Stack><Tag tone="gold">Sprd</Tag><Value>4.0</Value></Stack></th>
        <th className={th}><Stack><Tag>ADR</Tag><Value>90</Value></Stack></th>
        <th className={th}><Stack><Tag>CDR</Tag><Value>10</Value></Stack></th>
        <th className={th}><Stack><Tag>PSO</Tag><Value>20/200</Value></Stack></th>
        <th className={th}><Stack><Tag tone="gold">RS</Tag><Value>5-9</Value></Stack></th>
        <th className={th}><Stack><Tag>BQR</Tag><Value size="xs">5.0-9.0</Value></Stack></th>
        <th className={th}>
          <Stack>
            <Tag tone="gold">GAP</Tag>
            <Tag tone="plain" size="xs">0.1-9.0</Tag>
            <div className="grid grid-cols-2 gap-[2px]"><Tag tone="off" size="xs">X</Tag><Tag size="xs">R</Tag></div>
          </Stack>
        </th>
        <th className={th}>
          <Stack>
            <Tag size="md">GA#</Tag>
            <Tag tone="plain" size="md">1-9</Tag>
            <div className="flex justify-around">
              <ArrowBtn dir="up" color="#ddd" bg="bg-[#0b0b0b]" />
              <ArrowBtn dir="down" color="#ddd" bg="bg-[#0b0b0b]" />
            </div>
          </Stack>
        </th>
        <th className={th}>
          <Stack className="pr-[2px]">
            <Tag tone="gold" size="md">Strength%</Tag>
            <div className="grid grid-cols-3 gap-px"><Tag tone="gold" size="md">M30</Tag><Tag tone="gold" size="md">H1</Tag><Tag tone="gold" size="md">H4</Tag></div>
            <div className="grid grid-cols-3 gap-[2px]">
              <Tag tone="plain" size="xs" className="justify-end">80-100</Tag>
              <Tag tone="plain" size="xs" className="justify-end">80-100</Tag>
              <Tag tone="plain" size="xs" className="justify-end">80-100</Tag>
            </div>
          </Stack>
        </th>
        <th className={th}>
          <Stack className="pr-[2px]">
            <Tag tone="gold" size="md">Candles</Tag>
            <Stripes count={9} gold={[1, 2, 3, 4, 5]} />
            <Stripes count={9} />
          </Stack>
        </th>
        <th className={th}>
          <Stack>
            <Tag tone="gold" size="xs">HeikenAshi</Tag>
            <div className="grid grid-cols-3 gap-[3px]"><Tag tone="gold" size="xs" className="justify-end">M30</Tag><Tag tone="gold" size="xs">H1</Tag><Tag tone="gold" size="xs">H4</Tag></div>
            <Tag tone="plain" size="sm">2/3/2/4</Tag>
          </Stack>
        </th>
        <th className={th}>
          <Stack>
            <Tag tone="gold" size="sm">MA</Tag>
            <div className="grid grid-cols-3 gap-[2px]"><Tag tone="gold" size="xs" className="justify-end">M30</Tag><Tag tone="gold" size="xs">H1</Tag><Tag tone="gold" size="xs">H4</Tag></div>
            <div className="grid grid-cols-3 gap-[2px]"><Tag tone="plain" size="xs">12</Tag><Tag tone="plain" size="xs">12</Tag><Tag tone="plain" size="xs">12</Tag></div>
          </Stack>
        </th>
        <th className={th}><Stack><Tag size="md">RSI</Tag><Tag tone="plain">D1/5</Tag><Tag tone="plain">75/25</Tag></Stack></th>
        <th className={th}><Stack><Tag size="md">CCI</Tag><Tag tone="plain">D1/20</Tag><Tag tone="plain" size="xs">100-150</Tag></Stack></th>
        <th className={th}><Stack><Tag size="md">BIAS</Tag><Tag tone="plain">D1/6</Tag><Tag tone="plain" size="xs">0.5-3.5</Tag></Stack></th>
        <th className={th}><Stack className="pr-[3px]"><Stripes count={8} /><Tag tone="plain" size="md">% in</Tag><Tag tone="plain" size="md">tooltips</Tag></Stack></th>
        <th className={th}>
          <Stack>
            <div className="grid grid-cols-5 gap-[2px]">
              {[1, 2, 3, 4, 5].map((n) => <Tag key={n} size="xs" tone={n < 4 ? 'gold' : 'silver'}>{n}</Tag>)}
            </div>
            <Tag>ANY</Tag>
            <div className="grid grid-cols-5 gap-[2px]">
              {[1, 2, 3, 4, 5].map((n) => <Tag key={n} size="xs" tone={n < 4 ? 'off' : 'silver'}>X</Tag>)}
            </div>
          </Stack>
        </th>
        {[['FTZ', 'D1'], ['FTZ', 'W1'], ['PTZ', 'D1'], ['PTZ', 'W1']].map(([name, tf], i) => (
          <th key={i} className={th}>
            <Stack className="px-[2px]"><span /><Tag>{name}</Tag><Tag tone="plain" size="md">{tf}</Tag></Stack>
          </th>
        ))}
        <th className={th}>
          <Stack className="px-[2px]">
            <span />
            <Tag>B|Q</Tag>
            <Tag tone="dim" size="md" className="gap-[6px]"><span>B</span><span>Q</span></Tag>
          </Stack>
        </th>
        <th className={th}><Stack><span /><Tag tone="plain" size="md">Bid</Tag><Tag tone="plain" size="md">Price</Tag></Stack></th>
        <th className={clsx(th, 'overflow-hidden')}>
          <Stack className="pl-[3px]">
            <span />
            <Tag tone="plain" className="justify-start">News ++</Tag>
            <Tag tone="plain" className="justify-start">High/90/</Tag>
          </Stack>
        </th>
      </tr>
    </thead>
  );
}

function PairRow({ pair }: { pair: string }) {
  const td = 'h-[14px] border-b-2 border-b-[#3c3c3c] p-0';
  const thin = clsx(td, THIN);
  const thick = clsx(td, THICK);
  return (
    <tr>
      <td className={clsx(td, 'bg-black')}>
        <div className={clsx(PAIR_GRID, 'h-3 pt-px text-center text-[10px] leading-[11px] text-[#1a1a1a]')}>
          <span>H</span><span>D</span><span>N</span>
          <Tag size="md">~</Tag>
          <Tag className="font-[DejaVu_Sans_Condensed,DejaVu_Sans,sans-serif]">{pair}</Tag>
          <Tag tone="cyan" size="sm">L</Tag>
          <Tag tone="violet" size="sm">S</Tag>
          <Tag tone="gray" size="sm">c</Tag>
        </div>
      </td>
      <td className={thick} />
      {Array.from({ length: 6 }, (_, i) => <td key={i} className={thin} />)}
      <td className={td} />
      <td className={thin} />
      <td className={thick} />
      <td className={thick} />
      <td className={clsx(thin, 'bg-[#1f1f1f]')}>
        <div className="flex gap-[3px] pl-[2px]">
          <span className="h-[10px] w-[14px] bg-black" />
          <span className="h-[10px] w-[14px] bg-black" />
          <span className="h-[10px] w-[14px] bg-black" />
        </div>
      </td>
      {Array.from({ length: 5 }, (_, i) => <td key={i} className={thin} />)}
      <td className={thin}>
        <div className="grid h-3 grid-cols-5 gap-px bg-[#141414]">
          {Array.from({ length: 5 }, (_, i) => <span key={i} className="bg-black" />)}
        </div>
      </td>
      {Array.from({ length: 6 }, (_, i) => <td key={i} className={thin} />)}
      <td className={td} />
    </tr>
  );
}

function Dashboard() {
  return (
    <div className="min-h-0 flex-1 overflow-hidden bg-[#0b0b0b]">
      <table className="w-full table-fixed border-separate border-spacing-0 border-t border-[#3c3c3c] font-[DejaVu_Sans,Verdana,sans-serif]">
        <colgroup>
          <col className="w-[152px]" />
          <col className="w-[268px]" />
          <col className="w-[33px]" />
          <col className="w-[32px]" />
          <col className="w-[32px]" />
          <col className="w-[46px]" />
          <col className="w-[29px]" />
          <col className="w-[42px]" />
          <col className="w-[38px]" />
          <col className="w-[35px]" />
          <col className="w-[90px]" />
          <col className="w-[47px]" />
          <col className="w-[52px]" />
          <col className="w-[46px]" />
          <col className="w-[40px]" />
          <col className="w-[41px]" />
          <col className="w-[42px]" />
          <col className="w-[44px]" />
          <col className="w-[66px]" />
          <col className="w-[37px]" />
          <col className="w-[37px]" />
          <col className="w-[37px]" />
          <col className="w-[37px]" />
          <col className="w-[28px]" />
          <col className="w-[50px]" />
          <col />
        </colgroup>
        <DashHead />
        <tbody>
          {PAIRS.map((pair) => <PairRow key={pair} pair={pair} />)}
        </tbody>
      </table>
    </div>
  );
}

function ChartWindow() {
  const frameBtn = 'flex h-[17px] w-[31px] items-center justify-center rounded-xs border border-[#5b6f88] bg-linear-to-b from-[#d5e3f2] to-[#a5bfdb]';
  return (
    <main className="flex min-w-0 flex-1 flex-col border-t border-l-2 border-[#6e6e6e] bg-[#ababab] pt-6 pb-4 pl-[25px]">
      <div className="flex min-h-0 flex-1 flex-col rounded-tl-md border border-r-0 border-black bg-linear-to-b from-[#98b4d4] to-[#b9d1ea] to-[30px] shadow-[inset_1px_1px_0_#fff]">
        <div className="flex h-[31px] shrink-0 items-center pt-[3px] pr-px pl-[10px]">
          <ChartsIcon />
          <h1 className="pl-[3px]">EURUSD,H1</h1>
          <div className="ml-auto flex gap-[2px]">
            <button type="button" aria-label="Minimize" className={frameBtn}>
              <Icon><rect x="3" y="8" width="10" height="3" fill="#fff" stroke="#4b5868" /></Icon>
            </button>
            <button type="button" aria-label="Maximize" className={frameBtn}>
              <Icon><path d="M3.500 3.500h9v8h-9zM6.500 6.500v2h3v-2z" fill="#fff" fillRule="evenodd" stroke="#4b5868" /></Icon>
            </button>
            <button type="button" aria-label="Close window" className="flex h-[17px] w-[31px] items-center justify-center rounded-xs border border-[#5e1a14] bg-linear-to-b from-[#e09a8c] to-[#b83c26]">
              <Icon>
                <path d="M4.500 4.500l7 7M11.500 4.500l-7 7" stroke="#5a4a50" strokeWidth="3.800" />
                <path d="M4.500 4.500l7 7M11.500 4.500l-7 7" stroke="#fff" strokeWidth="2.200" />
              </Icon>
            </button>
          </div>
        </div>
        <div className="mr-px ml-[8px] flex min-h-0 flex-1 flex-col border-[3px] border-t-2 border-black outline outline-[#8a97a6]">
          <div className="flex min-h-0 flex-1 flex-col border border-[#c0c0c0] font-[DejaVu_Sans,Verdana,sans-serif]">
            <ControlPanel />
            <Dashboard />
          </div>
        </div>
        <div className="mt-px flex h-[9px] shrink-0 flex-col border-b border-[#38b8dc]">
          <span className="h-[2px] bg-white" />
        </div>
      </div>
    </main>
  );
}

function Terminal() {
  return (
    <section className="flex h-[54px] shrink-0 overflow-hidden border-t-2 border-white bg-[#f0f0f0] pt-[3px]">
      <div className="flex w-[13px] shrink-0 flex-col gap-[5px] pt-1">
        <button type="button" aria-label="Close terminal" className="pl-[2px]"><CloseGlyph /></button>
        <span className="flex-1 bg-[#dbe6f2]" />
      </div>
      <table className="h-[46px] w-full table-fixed border-separate border-spacing-0 border-t border-l border-[#828790] bg-white text-left">
        <colgroup>
          <col className="w-[160px]" />
          <col />
        </colgroup>
        <thead>
          <tr className="bg-linear-to-b from-white to-[#f1f2f4]">
            <th className="h-[25px] border-r border-b border-[#d0d0d0] p-0 pt-[2px] pl-[6px] font-normal">Время</th>
            <th className="h-[25px] border-b border-[#d0d0d0] p-0 pt-[2px] pl-[6px] font-normal">Сообщение</th>
          </tr>
        </thead>
        <tbody className="text-[11px]">
          <tr className="bg-[#e9e9e9]">
            <td className="h-5 border-r border-b border-[#c0c0c0] p-0 pl-[3px]">
              <span className="flex items-center gap-[6px] leading-4">
                <svg width="13" height="13" viewBox="0 0 13 13" aria-hidden="true">
                  <circle cx="6.500" cy="6.500" r="6" fill="#e02424" stroke="#a01010" strokeWidth=".7" />
                  <path d="M3 6.500h7" stroke="#fff" strokeWidth="2.400" />
                </svg>
                2016.02.11 15:36:16.871
              </span>
            </td>
            <td className="h-5 border-b border-[#c0c0c0] p-0 pl-1 leading-4">
              DBMultiASMdevX006e3 EURUSD,H1: array out of range in 'DBMultiASMdevX006e3.mq4' (7840,38)
            </td>
          </tr>
        </tbody>
      </table>
    </section>
  );
}

/* freehand marker loop round the error line */
function Marker() {
  return (
    <svg width="840" height="94" viewBox="0 600 840 94" className="pointer-events-none absolute bottom-0 left-0" fill="none" aria-hidden="true">
      <path
        d="M12 696L9 680 9 661 12 642 22 629 33 627 53 625 70 620 100 619 200 618 218 614 277 613 283 611 346 611 354 614 378 619 460 620 488 623 565 625 580 628 625 636 730 636 746 640 795 645 815 653M809 646V658L804 670 793 685 788 696"
        stroke="#000"
        strokeWidth="4"
        strokeLinejoin="round"
        strokeLinecap="square"
      />
    </svg>
  );
}

export default function App() {
  return (
    <div className="relative flex h-screen flex-col overflow-hidden bg-[#f0f0f0] font-[Open_Sans,Segoe_UI,sans-serif] text-[12px] leading-4 text-black">
      <header className="flex shrink-0 flex-col border-b border-[#a0a0a0] bg-[#f0f0f0] pt-[3px]">
        <MainToolbar />
        <DrawingToolbar />
      </header>
      <div className="flex min-h-0 flex-1">
        <aside className="flex w-[185px] shrink-0 flex-col bg-[#f0f0f0]">
          <MarketWatch />
          <Navigator />
        </aside>
        <ChartWindow />
      </div>
      <Terminal />
      <Marker />
    </div>
  );
}
